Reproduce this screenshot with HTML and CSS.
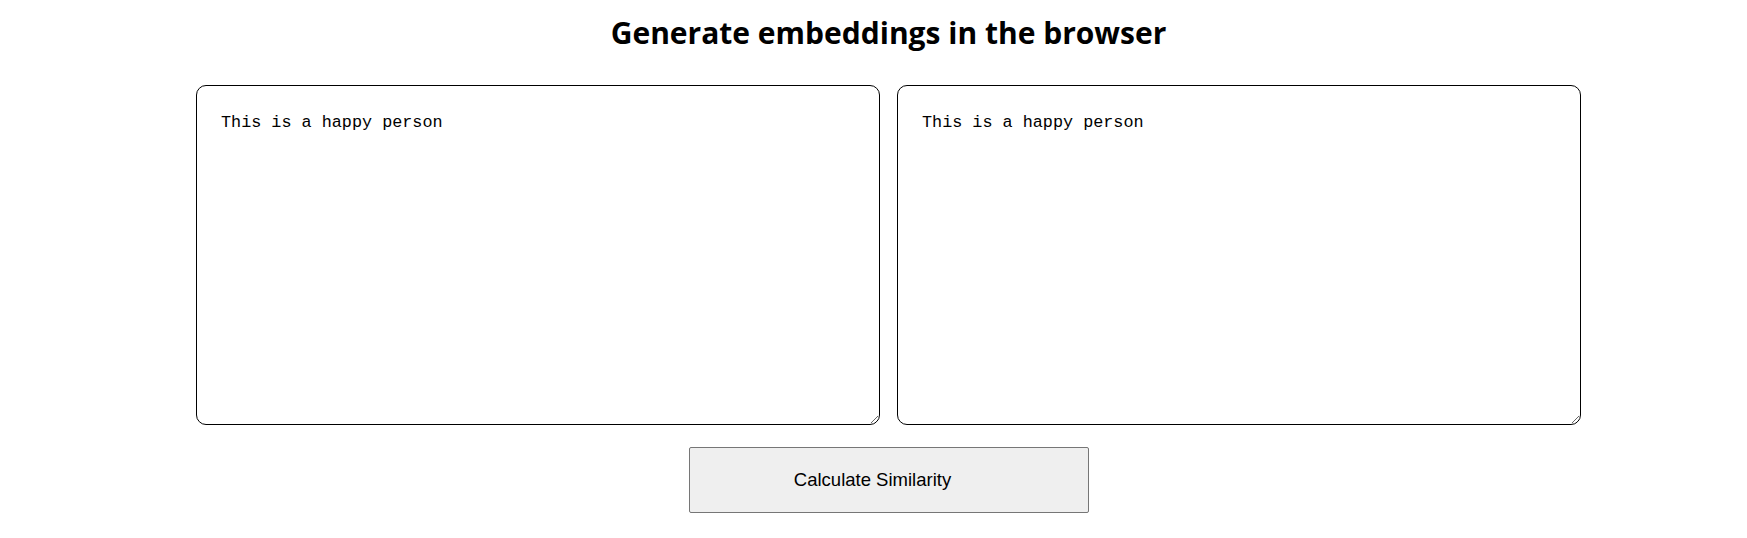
FILE: index.html
```html
<!DOCTYPE html>
<html lang="en">
<head>
<meta charset="utf-8">
<title>Generate embeddings in the browser</title>
<link rel="stylesheet" href="styles.css">
</head>
<body>
<main class="page">
  <h1 class="title">Generate embeddings in the browser</h1>
  <div class="inputs">
    <textarea class="box">This is a happy person</textarea>
    <textarea class="box">This is a happy person</textarea>
  </div>
  <button class="calc" type="button">Calculate Similarity</button>
</main>
</body>
</html>
```
FILE: styles.css
```css
html, body {
  margin: 0;
  padding: 0;
  background: #ffffff;
}

.page {
  width: 1385px;
  margin-left: 196px;
  display: flex;
  flex-direction: column;
  align-items: center;
}

.title {
  font-family: "Open Sans", "Noto Sans", sans-serif;
  font-weight: 700;
  font-size: 30px;
  line-height: 38px;
  margin: 14px 0 33px;
  color: #000;
}

.inputs {
  width: 100%;
  display: grid;
  grid-template-columns: 1fr 1fr;
  column-gap: 17px;
}

.box {
  box-sizing: border-box;
  height: 340px;
  width: 100%;
  margin: 0;
  padding: 27px 24px;
  border: 1px solid #000;
  border-radius: 10px;
  font-family: "Liberation Mono", monospace;
  font-size: 16.8px;
  color: #000;
  background: #fff;
  resize: both;
}

.calc {
  box-sizing: border-box;
  margin-top: 22px;
  width: 400px;
  height: 66px;
  padding: 0 32px 0 0;
  background: #efefef;
  border: 1px solid #767676;
  border-radius: 2px;
  font-family: "Liberation Sans", Arial, sans-serif;
  font-size: 18.5px;
  color: #000;
}
```
